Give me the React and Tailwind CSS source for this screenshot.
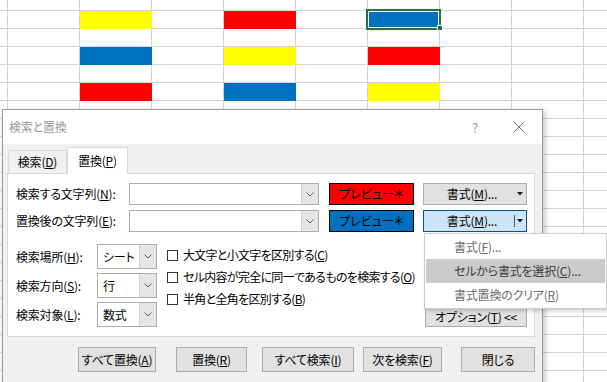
import React from "react";

const fills = {
  "1-2": "bg-[#ffff00]",
  "1-4": "bg-[#ff0000]",
  "1-6": "bg-[#0070c0]",
  "3-2": "bg-[#0070c0]",
  "3-4": "bg-[#ffff00]",
  "3-6": "bg-[#ff0000]",
  "5-2": "bg-[#ff0000]",
  "5-4": "bg-[#0070c0]",
  "5-6": "bg-[#ffff00]",
};

const rows = Array.from({ length: 23 }, (_, i) => i);
const cols = Array.from({ length: 10 }, (_, i) => i);

function Grid() {
  return (
    <div className="absolute inset-0 overflow-hidden bg-white">
      <div className="-mt-[7px] -ml-[64px] flex flex-col">
        {rows.map((r) => (
          <div key={r} className="flex">
            {cols.map((c) => {
              const f = fills[`${r}-${c}`];
              return (
                <div
                  key={c}
                  className={`w-[72px] h-[18px] shrink-0 ${
                    f ? f : "border-r border-b border-[#d4d4d4]"
                  }`}
                />
              );
            })}
          </div>
        ))}
      </div>
      <div className="absolute left-[366px] top-[9px] w-[75px] h-[21px] border-2 border-[#217346] shadow-[inset_0_0_0_1px_#ffffff]" />
      <div className="absolute left-[437px] top-[25px] w-[6px] h-[6px] bg-[#217346] border border-white" />
    </div>
  );
}

function Chevron() {
  return (
    <svg width="8" height="5" viewBox="0 0 8 5">
      <path d="M0.5 0.5 L4 4 L7.5 0.5" fill="none" stroke="#606060" strokeWidth="1" />
    </svg>
  );
}

function Tri() {
  return (
    <svg width="6" height="4" viewBox="0 0 6 4">
      <polygon points="0,0 6,0 3,3.5" fill="#1a1a1a" />
    </svg>
  );
}

function Combo() {
  return (
    <div className="w-[190px] h-[22px] border border-[#adadad] bg-white flex">
      <div className="flex-1" />
      <div className="w-[17px] h-full bg-[#e5e5e5] border-l border-[#cfcfcf] flex items-center justify-center">
        <Chevron />
      </div>
    </div>
  );
}

function Select({ value }) {
  return (
    <div className="w-[60px] h-[25px] border border-[#adadad] bg-white flex">
      <div className="flex-1 pl-[5px] flex items-center text-[12px] text-black whitespace-nowrap">{value}</div>
      <div className="w-[17px] h-full bg-[#e5e5e5] border-l border-[#cfcfcf] flex items-center justify-center">
        <Chevron />
      </div>
    </div>
  );
}

function Preview({ bg }) {
  return (
    <div className={`w-[85px] h-[22px] border border-black ${bg} flex items-center justify-center text-[12px] text-black tracking-normal`}>
      プレビュー＊
    </div>
  );
}

function FormatBtn({ active }) {
  return (
    <div
      className={`w-[104px] h-[22px] border flex items-center ${
        active ? "bg-[#cce4f7] border-[#005499]" : "bg-[#e1e1e1] border-[#adadad]"
      }`}
    >
      <div className="flex-1 flex items-center justify-center pl-[6px] text-[12px] text-black">
        書式(<u>M</u>)...
      </div>
      <div className={`h-[12px] w-px ${active ? "bg-[#555555]" : "bg-transparent"}`} />
      <div className="w-[11px] flex items-center justify-center pr-[1px]">
        <Tri />
      </div>
    </div>
  );
}

function Check({ children }) {
  return (
    <div className="h-[22px] flex items-center">
      <div className="w-[11px] h-[11px] border border-[#333333] bg-white shrink-0" />
      <div className="ml-[5px] text-[12px] text-black whitespace-nowrap tracking-[-0.7px]">{children}</div>
    </div>
  );
}

function Btn({ w, ml, children }) {
  return (
    <div
      className={`h-[25px] border border-[#adadad] bg-[#e1e1e1] flex items-center justify-center text-[12px] text-black ${w} ${ml}`}
    >
      {children}
    </div>
  );
}

function Dialog() {
  return (
    <div className="absolute left-[2px] top-[109px] w-[541px] h-[290px] border border-[#9b9b9b] bg-[#f0f0f0] shadow-[2px_2px_6px_rgba(0,0,0,0.25)] flex flex-col">
      <div className="h-[34px] bg-white flex items-center pl-[6px] pr-[17px]">
        <div className="text-[12px] text-[#9a9a9a]">検索と置換</div>
        <div className="ml-auto text-[13px] text-[#9a9a9a] mr-[35px]">?</div>
        <svg width="12" height="12" viewBox="0 0 12 12">
          <path d="M0.5 0.5 L11.5 11.5 M11.5 0.5 L0.5 11.5" stroke="#707070" strokeWidth="1" />
        </svg>
      </div>
      <div className="pl-[4px] pt-[3px] flex flex-col">
        <div className="h-[26px] flex items-end">
          <div className="ml-px w-[59px] h-[23px] border border-b-0 border-[#d9d9d9] bg-[#f0f0f0] flex items-center justify-center text-[12px] text-black">
            検索(<u>D</u>)
          </div>
          <div className="relative z-10 -mb-px w-[61px] h-[27px] border border-b-0 border-[#d9d9d9] bg-white flex items-center justify-center text-[12px] text-black">
            置換(<u>P</u>)
          </div>
        </div>
        <div className="w-[528px] h-[164px] border border-[#d9d9d9] bg-white flex flex-col pl-[8px]">
          <div className="mt-[9px] flex items-center">
            <div className="w-[113px] text-[12px] text-black whitespace-nowrap">
              検索する文字列(<u>N</u>):
            </div>
            <Combo />
            <div className="ml-[10px]">
              <Preview bg="bg-[#ff0000]" />
            </div>
            <div className="ml-[9px]">
              <FormatBtn />
            </div>
          </div>
          <div className="mt-[5px] flex items-center">
            <div className="w-[113px] text-[12px] text-black whitespace-nowrap">
              置換後の文字列(<u>E</u>):
            </div>
            <Combo />
            <div className="ml-[10px]">
              <Preview bg="bg-[#0070c0]" />
            </div>
            <div className="ml-[9px]">
              <FormatBtn active />
            </div>
          </div>
          <div className="mt-[12px] flex">
            <div className="flex flex-col gap-[4px]">
              {[
                ["検索場所", "H", "シート"],
                ["検索方向", "S", "行"],
                ["検索対象", "L", "数式"],
              ].map(([l, k, v]) => (
                <div key={k} className="flex items-center">
                  <div className="w-[81px] text-[12px] text-black whitespace-nowrap">
                    {l}(<u>{k}</u>):
                  </div>
                  <Select value={v} />
                </div>
              ))}
            </div>
            <div className="ml-[10px] flex flex-col">
              <Check>
                大文字と小文字を区別する(<u>C</u>)
              </Check>
              <Check>
                セル内容が完全に同一であるものを検索する(<u>O</u>)
              </Check>
              <Check>
                半角と全角を区別する(<u>B</u>)
              </Check>
            </div>
            <div className="ml-auto mr-[7px] flex flex-col justify-end">
              <div className="w-[102px] h-[21px] border border-[#adadad] bg-[#e1e1e1] flex items-center justify-center text-[12px] text-black whitespace-nowrap">
                オプション(<u>T</u>) &lt;&lt;
              </div>
            </div>
          </div>
        </div>
        <div className="mt-[10px] flex">
          <Btn w="w-[78px]" ml="ml-[71px]">
            すべて置換(<u>A</u>)
          </Btn>
          <Btn w="w-[71px]" ml="ml-[20px]">
            置換(<u>R</u>)
          </Btn>
          <Btn w="w-[92px]" ml="ml-[15px]">
            すべて検索(<u>I</u>)
          </Btn>
          <Btn w="w-[79px]" ml="ml-[9px]">
            次を検索(<u>F</u>)
          </Btn>
          <Btn w="w-[74px]" ml="ml-[19px]">
            閉じる
          </Btn>
        </div>
      </div>
    </div>
  );
}

function Menu() {
  return (
    <div className="absolute left-[424px] top-[233px] w-[183px] h-[76px] bg-white border border-[#cccccc] shadow-[2px_2px_4px_rgba(0,0,0,0.2)] py-px flex flex-col text-[12px]">
      <div className="h-[24px] pl-[29px] flex items-center text-[#6d6d6d]">
        書式(<u>F</u>)...
      </div>
      <div className="h-[24px] mx-px pl-[28px] flex items-center bg-[#cbcbcb] text-[#3c3c3c]">
        セルから書式を選択(<u>C</u>)...
      </div>
      <div className="h-[24px] pl-[29px] flex items-center text-[#6d6d6d]">
        書式置換のクリア(<u>R</u>)
      </div>
    </div>
  );
}

export default function App() {
  return (
    <div className="relative w-[607px] h-[382px] overflow-hidden font-['Noto_Sans_CJK_JP',sans-serif] leading-none [font-feature-settings:'palt'] tracking-[-0.2px]">
      <Grid />
      <Dialog />
      <Menu />
    </div>
  );
}
